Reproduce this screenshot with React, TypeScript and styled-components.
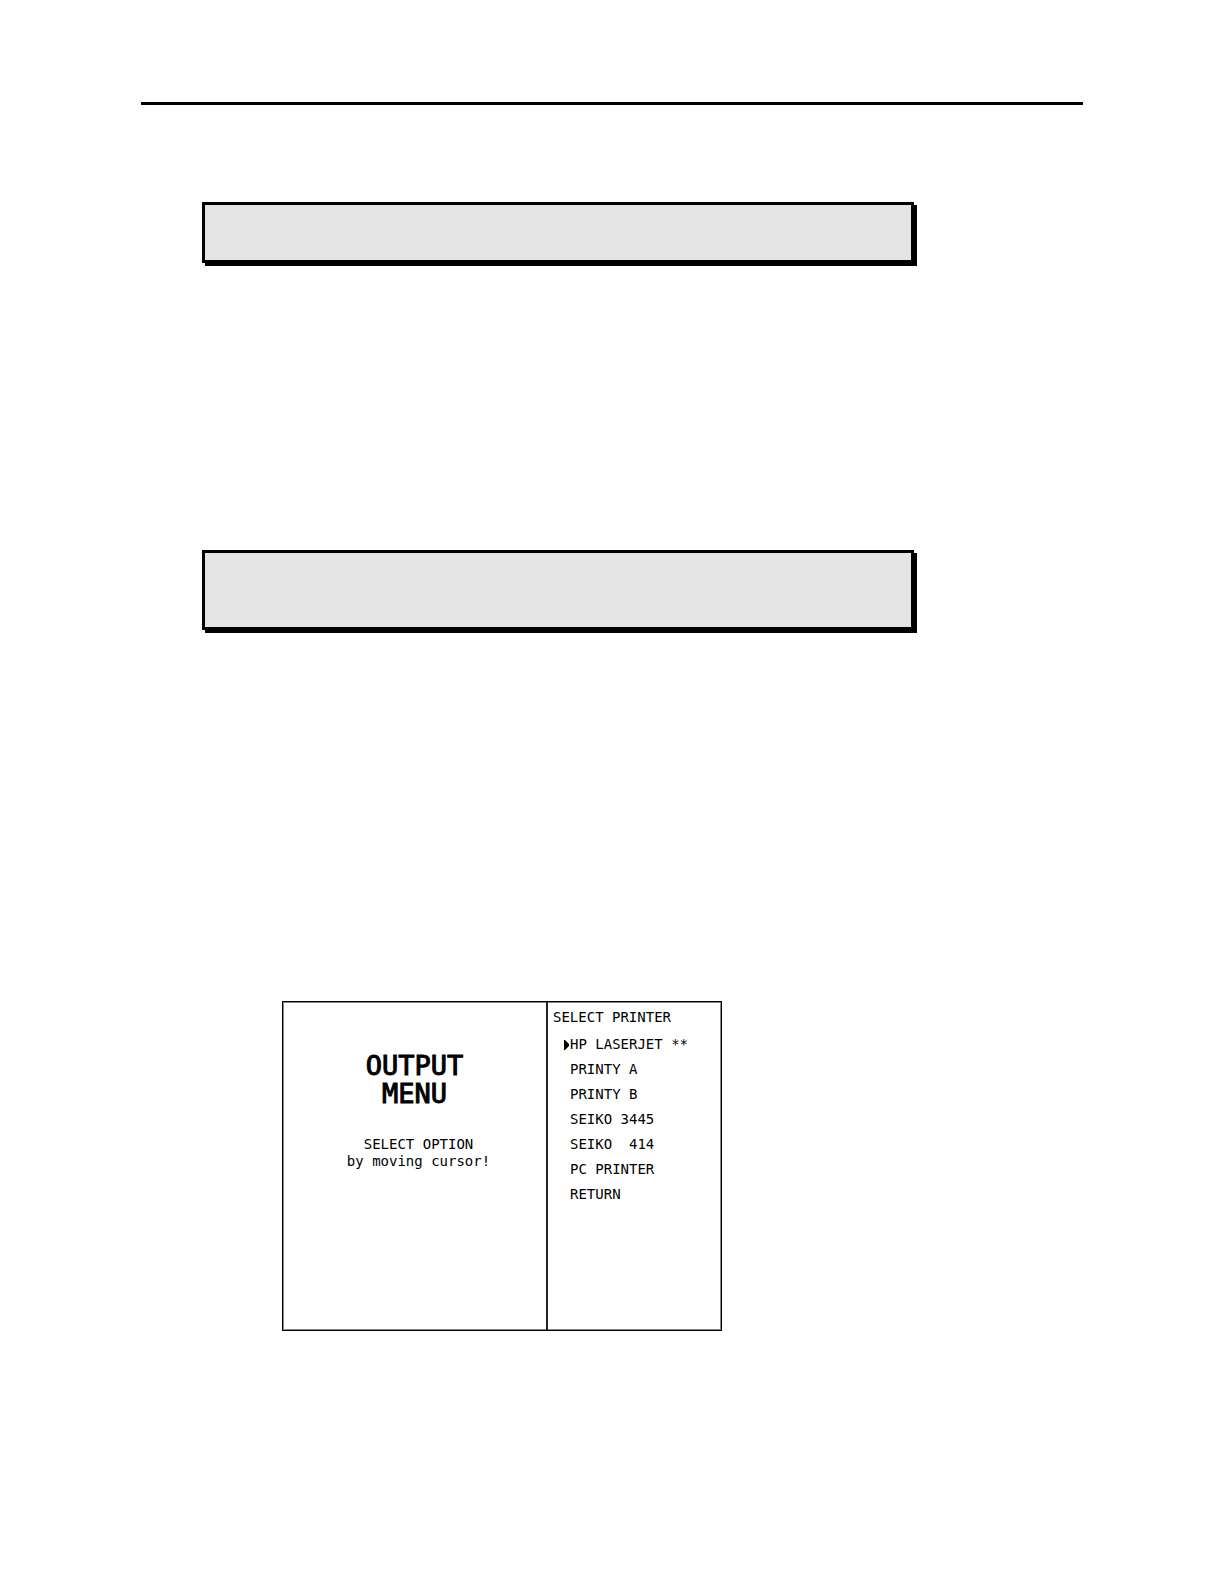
import React, { useState } from "react";
import styled, { createGlobalStyle } from "styled-components";

const GlobalStyle = createGlobalStyle`
  body {
    margin: 0;
    background: #fff;
    color: #000;
    font-family: "DejaVu Sans Mono", "Liberation Mono", monospace;
  }
`;

const Page = styled.main`
  display: flex;
  flex-direction: column;
  padding: 102px 141px 253px;
`;

const Rule = styled.hr`
  width: 100%;
  height: 3px;
  margin: 0 0 97px;
  border: 0;
  background: #000;
`;

const Notes = styled.div`
  display: flex;
  flex-direction: column;
  gap: 287px;
  margin: 0 169px 371px 61px;
`;

const Note = styled.section<{ $height: number }>`
  box-sizing: border-box;
  min-height: ${(p) => p.$height}px;
  border: 3px solid #000;
  background: #e4e4e4;
  box-shadow: 3px 3px 0 #000;
`;

const Screen = styled.section`
  box-sizing: border-box;
  display: grid;
  grid-template-columns: 1fr 175px;
  width: 100%;
  max-width: 440px;
  min-height: 330px;
  margin-left: 141px;
  border: 1px solid #000;
  box-shadow: inset 0 0 0 1px #888;
  font-size: 14px;
  line-height: 17px;
`;

const Intro = styled.div`
  display: flex;
  flex-direction: column;
  align-items: center;
  gap: 28px;
  padding-top: 50px;
  text-align: center;
`;

const Title = styled.h1`
  margin: 0;
  font-size: 27px;
  font-weight: normal;
  line-height: 28px;
  -webkit-text-stroke: 1px #000;
`;

const Hint = styled.p`
  margin: 0;
  padding-left: 8px;
`;

const Options = styled.div`
  display: flex;
  flex-direction: column;
  gap: 6px;
  padding: 7px 5px;
  border-left: 2px solid #222;
`;

const Heading = styled.h2`
  margin: 0;
  font-size: 14px;
  font-weight: normal;
`;

const List = styled.ul`
  margin: 0;
  padding: 0;
  list-style: none;
`;

const Option = styled.button`
  display: flex;
  align-items: center;
  width: 100%;
  height: 25px;
  padding: 0 0 0 11px;
  border: 0;
  background: none;
  color: inherit;
  font: inherit;
  white-space: pre;
  cursor: pointer;
`;

const Cursor = styled.svg<{ $visible: boolean }>`
  width: 6px;
  height: 10px;
  visibility: ${(p) => (p.$visible ? "visible" : "hidden")};
`;

const printers = [
  "HP LASERJET **",
  "PRINTY A",
  "PRINTY B",
  "SEIKO 3445",
  "SEIKO  414",
  "PC PRINTER",
  "RETURN",
];

export default function App() {
  const [selected, setSelected] = useState(0);
  return (
    <>
      <GlobalStyle />
      <Page>
        <Rule />
        <Notes>
          <Note $height={61} />
          <Note $height={80} />
        </Notes>
        <Screen>
          <Intro>
            <Title>
              OUTPUT
              <br />
              MENU
            </Title>
            <Hint>
              SELECT OPTION
              <br />
              by moving cursor!
            </Hint>
          </Intro>
          <Options>
            <Heading>SELECT PRINTER</Heading>
            <List>
              {printers.map((name, i) => (
                <li key={name}>
                  <Option type="button" onClick={() => setSelected(i)}>
                    <Cursor $visible={i === selected} viewBox="0 0 6 10" aria-hidden="true">
                      <path d="M0 0H1L5 4V6L1 10H0Z" />
                    </Cursor>
                    {name}
                  </Option>
                </li>
              ))}
            </List>
          </Options>
        </Screen>
      </Page>
    </>
  );
}
